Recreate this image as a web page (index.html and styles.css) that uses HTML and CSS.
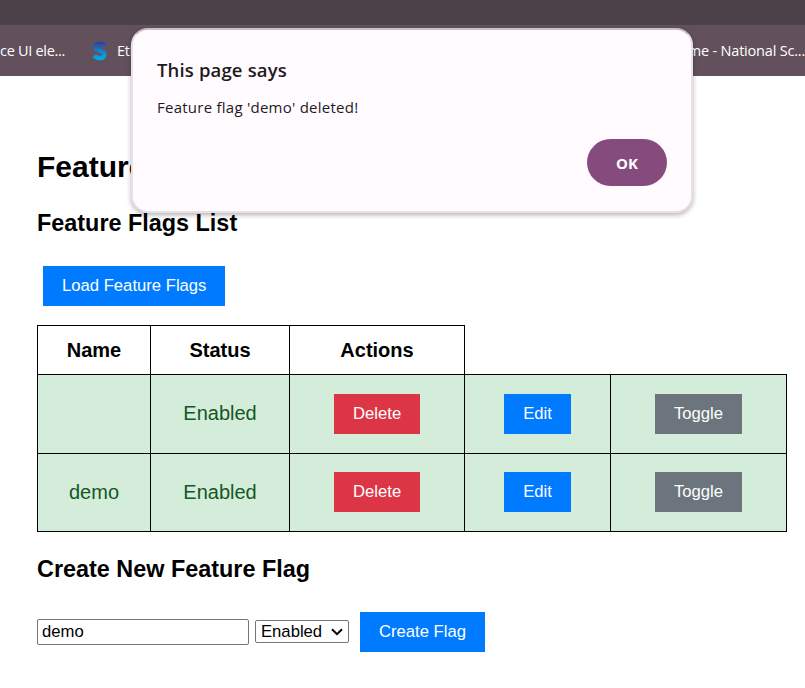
FILE: index.html
```html
<!DOCTYPE html>
<html lang="en">
<head>
<meta charset="utf-8">
<title>Feature Flags</title>
<link rel="stylesheet" href="styles.css">
</head>
<body>
<div class="toolbar"></div>
<nav class="bookmarks">
  <span class="mark mark-first">ce UI ele...</span>
  <svg class="logo" width="16" height="20" viewBox="0 0 16 20">
    <defs><linearGradient id="s" x1="0" y1="0" x2="0" y2="20" gradientUnits="userSpaceOnUse"><stop offset="0.08" stop-color="#2b3fa5"/><stop offset="0.5" stop-color="#1683cc"/><stop offset="0.9" stop-color="#00a9e6"/></linearGradient></defs>
    <path d="M13 5.4C10.5 2.2 4 2.2 3.6 6C3.3 9.8 12.4 9 12.3 13.4C12 18 5 17.8 2.2 14.6" fill="none" stroke="url(#s)" stroke-width="4.6"/>
  </svg>
  <span class="mark mark-mid">Ethnus</span>
  <span class="mark mark-last">Home - National Sc...</span>
</nav>
<main class="page">
  <h1>Feature Flags</h1>
  <h2>Feature Flags List</h2>
  <button class="btn load">Load Feature Flags</button>
  <table>
    <colgroup><col class="c1"><col class="c2"><col class="c3"><col class="c4"><col class="c5"></colgroup>
    <thead><tr><th>Name</th><th>Status</th><th>Actions</th></tr></thead>
    <tbody>
      <tr class="row-a"><td></td><td>Enabled</td><td><button class="btn red">Delete</button></td><td><button class="btn">Edit</button></td><td><button class="btn gray">Toggle</button></td></tr>
      <tr class="row-b"><td>demo</td><td>Enabled</td><td><button class="btn red">Delete</button></td><td><button class="btn">Edit</button></td><td><button class="btn gray">Toggle</button></td></tr>
    </tbody>
  </table>
  <h2 class="create">Create New Feature Flag</h2>
  <form class="form">
    <input type="text" value="demo">
    <div class="select"><span>Enabled</span><svg width="12" height="8" viewBox="0 0 12 8"><path d="M1 1.3L6 6.2L11 1.3" fill="none" stroke="#000" stroke-width="2"/></svg></div>
    <button type="button" class="btn submit">Create Flag</button>
  </form>
</main>
<div class="dialog">
  <div class="title">This page says</div>
  <div class="message">Feature flag 'demo' deleted!</div>
  <button class="ok">OK</button>
</div>
</body>
</html>
```
FILE: styles.css
```css
* { box-sizing: border-box; }
body {
  margin: 0;
  width: 805px;
  height: 688px;
  overflow: hidden;
  position: relative;
  background: #fff;
  color: #000;
  font-family: "Liberation Sans", Arial, sans-serif;
  font-size: 20px;
}
.toolbar { height: 25px; background: #4c4049; }
.bookmarks {
  display: flex;
  align-items: center;
  height: 51px;
  background: #62515c;
  color: #fff;
  font: 14.5px "Open Sans", sans-serif;
  white-space: nowrap;
}
.mark-first { width: 92px; letter-spacing: -0.3px; }
.logo { flex: none; }
.mark-mid { margin-left: 9px; letter-spacing: -0.3px; }
.mark-last { margin-left: auto; letter-spacing: -0.2px; }
.page { padding: 71px 18px 0 37px; }
h1 { margin: 0; font-size: 30px; line-height: 40px; }
h2 { margin: 21px 0 0; font-size: 23.4px; line-height: 30px; }
.btn {
  display: block;
  height: 40px;
  padding: 0 19px;
  border: 0;
  background: #007bff;
  color: #fff;
  font: 16.67px "Liberation Sans", Arial, sans-serif;
  white-space: nowrap;
}
.load { margin: 28px 0 19px 6px; width: 182px; }
.red { background: #dc3545; width: 86px; }
.gray { background: #6c757d; width: 87px; }
table { border-collapse: collapse; table-layout: fixed; width: 750px; }
.c1 { width: 113px; }
.c2 { width: 139px; }
.c3 { width: 175px; }
.c4 { width: 146px; }
.c5 { width: 176px; }
th, td { border: 1px solid #000; padding: 0; text-align: center; vertical-align: middle; }
th { height: 49px; }
td { background: #d4edda; color: #155724; }
.row-a td { height: 79px; padding-bottom: 1px; }
.row-b td { height: 78px; }
.row-b td:nth-child(n+3) { padding-bottom: 2px; }
td .btn { margin: 0 auto; }
.create { margin-top: 22px; }
.form { display: flex; align-items: center; margin-top: 28px; }
input {
  width: 212px;
  height: 26px;
  padding: 0 4px 1px;
  border: 1px solid #767676;
  border-radius: 2px;
  font: 16.67px "Liberation Sans", Arial, sans-serif;
}
.select {
  display: flex;
  align-items: center;
  justify-content: space-between;
  width: 94px;
  height: 23px;
  margin: 0 11px 1px 6px;
  padding: 0 5px;
  border: 1px solid #767676;
  border-radius: 2px;
  font-size: 16.67px;
}
.submit { width: 125px; }
.dialog {
  position: absolute;
  left: 131px;
  top: 28px;
  width: 562px;
  height: 185px;
  padding: 28px 24px 0;
  border: 2px solid #e9dfe7;
  border-top-color: #cdbfca;
  border-radius: 17px;
  background: #fffbff;
  box-shadow: 0 2px 5px rgba(0, 0, 0, 0.3);
  color: #1f1a1d;
  font-family: "Open Sans", sans-serif;
}
.title { font-size: 18.5px; font-weight: 600; line-height: 24px; letter-spacing: 0.15px; }
.message { margin-top: 14px; font-size: 15px; line-height: 22px; letter-spacing: 0.25px; }
.ok {
  display: block;
  width: 80px;
  height: 47px;
  margin: 21px 0 0 auto;
  padding: 0;
  border: 0;
  border-radius: 24px;
  background: #854b7c;
  color: #fff;
  font: 700 15px "Open Sans", sans-serif;
}
```
